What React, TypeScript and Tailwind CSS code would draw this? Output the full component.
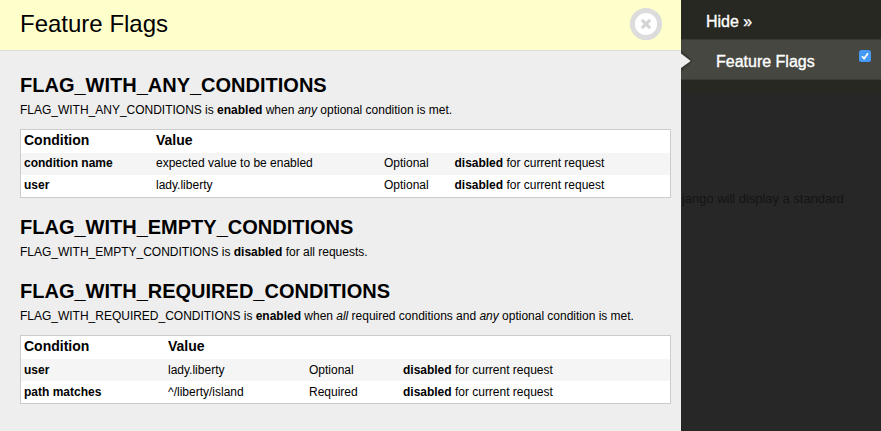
import type { ReactNode } from "react";

type Row = { name: string; value: string; kind: string };

function Heading({ children }: { children: ReactNode }) {
  return <h3 className="h-6 text-[20px] leading-6 font-bold whitespace-nowrap"><span>{children}</span></h3>;
}

function Description({ children }: { children: ReactNode }) {
  return <p className="mt-[5px] h-4 text-[12px] leading-4 tracking-[-0.01px] whitespace-nowrap"><span>{children}</span></p>;
}

function ConditionTable({ rows, columns, cellLeading }: { rows: Row[]; columns: string; cellLeading: string }) {
  return (
    <div className="w-[651px] border border-[#cccccc] bg-white pb-px text-[12px]">
      <div className={`grid h-[23px] pl-[3px] text-[14px] leading-[21px] font-bold ${columns}`}>
        <span>Condition</span>
        <span>Value</span>
      </div>
      {rows.map((row, i) => (
        <div
          key={row.name}
          className={`grid pl-[3px] whitespace-nowrap ${columns} ${cellLeading} ${i === 0 ? "h-[22px] bg-[#f5f5f5]" : "h-[21px]"}`}
        >
          <b>{row.name}</b>
          <span>{row.value}</span>
          <span>{row.kind}</span>
          <span className="tracking-[-0.01px]"><b>disabled</b> for current request</span>
        </div>
      ))}
    </div>
  );
}

export default function App() {
  return (
    <div className="flex h-[431px] w-[881px] overflow-hidden bg-[#272727] font-['Liberation_Sans',Arial,sans-serif] text-black">
      <main className="w-[681px] shrink-0 bg-[#eeeeee]">
        <header className="flex h-[51px] justify-between border-b border-[#dddddd] bg-[#ffffcc] pr-[18px] pl-5">
          <h1 className="text-[24px] leading-[48px]">Feature Flags</h1>
          <svg className="mt-[7px] h-[34px] w-[34px]" viewBox="0 0 34 34" aria-label="Close">
            <circle cx="17" cy="17" r="13.6" fill="#fff" stroke="#dcdcdc" strokeWidth="5" />
            <path d="M13.9 13.9l6.2 6.2M20.1 13.9l-6.2 6.2" stroke="#d4d4d4" strokeWidth="3" strokeLinecap="square" />
          </svg>
        </header>
        <div className="pt-[22px] pl-5">
          <section>
            <Heading>FLAG_WITH_ANY_CONDITIONS</Heading>
            <Description>
              FLAG_WITH_ANY_CONDITIONS is <b>enabled</b> when <i>any</i> optional condition is met.
            </Description>
            <div className="mt-[11px]">
              <ConditionTable
                columns="grid-cols-[132px_228px_70.5px_1fr]"
                cellLeading="leading-5"
                rows={[
                  { name: "condition name", value: "expected value to be enabled", kind: "Optional" },
                  { name: "user", value: "lady.liberty", kind: "Optional" },
                ]}
              />
            </div>
          </section>
          <section className="mt-[17px]">
            <Heading>FLAG_WITH_EMPTY_CONDITIONS</Heading>
            <Description>
              FLAG_WITH_EMPTY_CONDITIONS is <b>disabled</b> for all requests.
            </Description>
          </section>
          <section className="mt-[19px]">
            <Heading>FLAG_WITH_REQUIRED_CONDITIONS</Heading>
            <Description>
              FLAG_WITH_REQUIRED_CONDITIONS is <b>enabled</b> when <i>all</i> required conditions and <i>any</i> optional condition is met.
            </Description>
            <div className="mt-[11px]">
              <ConditionTable
                columns="grid-cols-[144px_141px_94px_1fr]"
                cellLeading="leading-[22px]"
                rows={[
                  { name: "user", value: "lady.liberty", kind: "Optional" },
                  { name: "path matches", value: "^/liberty/island", kind: "Required" },
                ]}
              />
            </div>
          </section>
        </div>
      </main>
      <aside className="w-[200px]">
        <div className="h-[39px] bg-[#272822] pl-[25px] text-[16px] leading-[44px] text-white [-webkit-text-stroke:0.35px_white]">Hide »</div>
        <div className="relative flex h-[41px] justify-between border-y border-[#393a34] bg-[#464740] pr-[10px] pl-[35px]">
          <svg className="absolute top-[9px] left-0 h-6 w-4" viewBox="0 0 16 24">
            <path d="M0 1L12 12L0 23Z" fill="#272822" opacity=".45" />
            <path d="M0 4.5L9.7 12L0 19Z" fill="#eeeeee" />
          </svg>
          <span className="text-[16px] leading-[44px] text-white [-webkit-text-stroke:0.35px_white]">Feature Flags</span>
          <svg className="mt-[10px] h-3 w-3" viewBox="0 0 12 12">
            <rect width="12" height="12" rx="2.5" fill="#459af7" />
            <path d="M3 6.3l2.1 2.3L9 3.2" fill="none" stroke="#fff" strokeWidth="1.7" />
          </svg>
        </div>
        <div className="h-[13px] bg-[#272822]" />
        <div className="mt-[87px] border-t border-[#252525] pt-[10px] pl-px text-[13px] leading-4 tracking-[-0.03px] whitespace-nowrap text-[#141414]">jango will display a standard</div>
      </aside>
    </div>
  );
}
